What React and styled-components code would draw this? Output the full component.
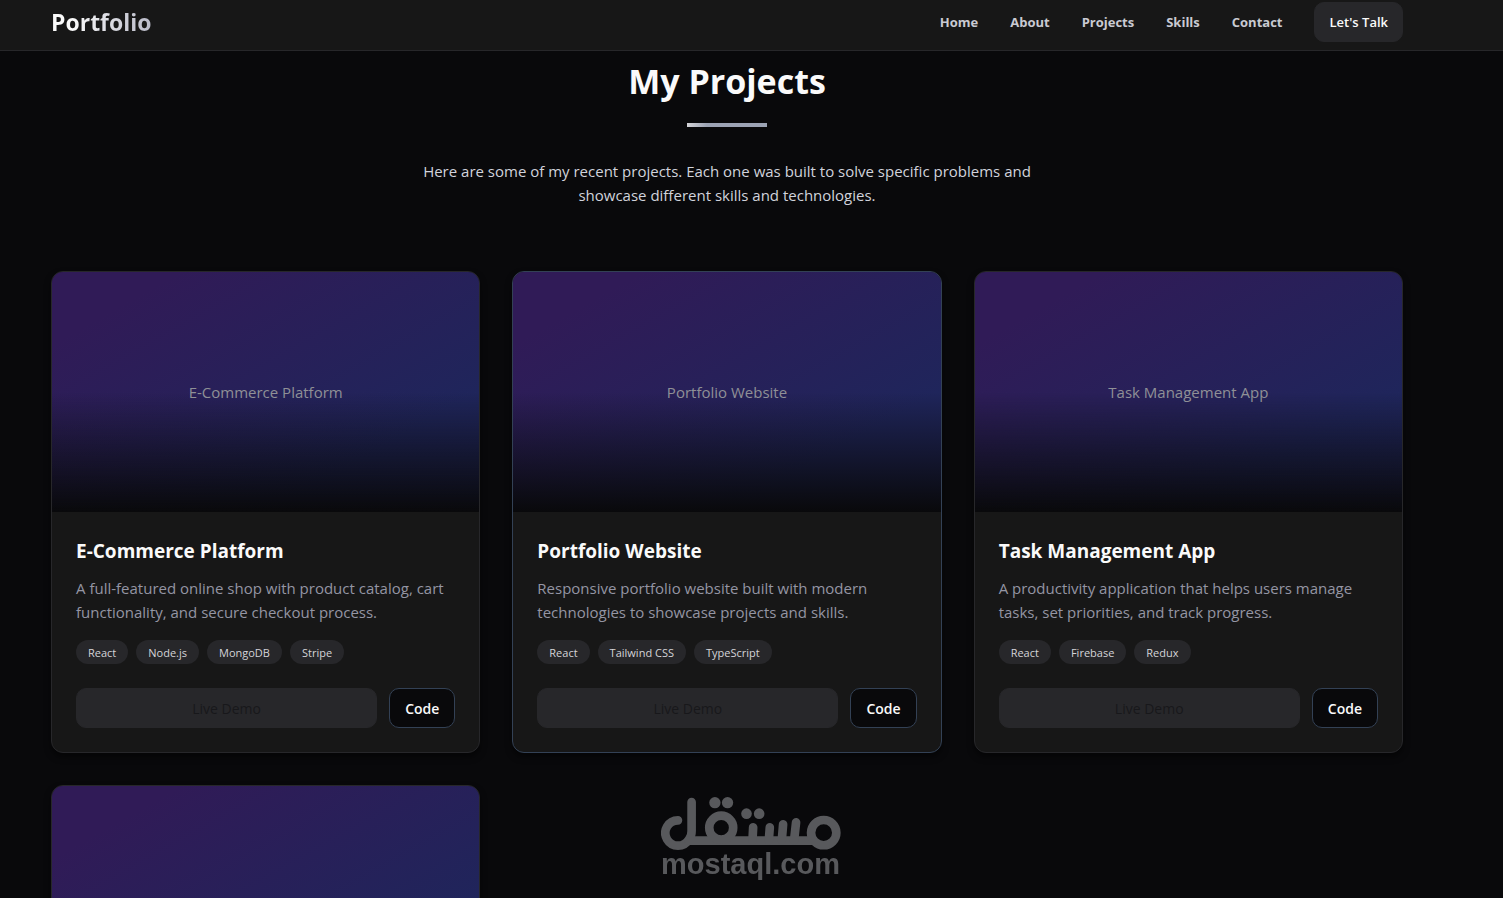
import React from "react";
import styled, { createGlobalStyle } from "styled-components";

const GlobalStyle = createGlobalStyle`
  * {
    box-sizing: border-box;
  }
  body {
    margin: 0;
    background: #09090b;
    color: #fafafa;
    font-family: "Segoe UI", "Open Sans", "Noto Sans", sans-serif;
    font-size: 15px;
    line-height: 24px;
  }
  h1, h2, h3, p, ul {
    margin: 0;
    padding: 0;
  }
`

const Page = styled.div`
  height: 100vh;
  overflow: hidden;
`

const Header = styled.header`
  display: flex;
  align-items: center;
  justify-content: space-between;
  padding: 2px 100px 8px 51px;
  background: #171717;
  border-bottom: 1px solid #27272a;
`

const Logo = styled.a`
  font-size: 23px;
  line-height: 34px;
  font-weight: 700;
  text-decoration: none;
  color: transparent;
  background: linear-gradient(to right, #fafafa 20%, #b9bac8);
  background-clip: text;
`

const Nav = styled.nav`
  display: flex;
  align-items: center;
  gap: 32px;
`

const NavLink = styled.a`
  font-size: 13px;
  line-height: 20px;
  font-weight: 700;
  color: #c9cad2;
  text-decoration: none;
`

const Button = styled.button`
  height: 40px;
  padding: 0 14px;
  border: 1px solid #27272a;
  border-radius: 10px;
  background: #27272a;
  color: #fafafa;
  font-family: inherit;
  font-size: 13px;
  font-weight: 600;
`

const DemoButton = styled(Button)`
  flex: 1;
  color: #18181b;
  font-size: 14px;
  font-weight: 400;
`

const CodeButton = styled(Button)`
  padding: 0 15px;
  border-color: #334155;
  background: #09090b;
  font-size: 14px;
`

const Section = styled.section`
  padding: 10px 100px 32px 51px;
`

const Intro = styled.div`
  display: flex;
  flex-direction: column;
  align-items: center;
  text-align: center;
  margin-bottom: 64px;
`

const Heading = styled.h2`
  font-size: 34px;
  line-height: 40px;
  font-weight: 700;
`

const Divider = styled.div`
  width: 80px;
  height: 4px;
  margin: 22px 0 32px;
  background: linear-gradient(to right, #d4d4d8, #9ca3b4 25%);
`

const Lead = styled.p`
  max-width: 672px;
  color: #d1d3dc;
`

const Grid = styled.div`
  display: grid;
  grid-template-columns: repeat(3, 1fr);
  gap: 32px;
`

const Card = styled.article`
  overflow: hidden;
  border: 1px solid ${props => props.$active ? "#334155" : "#27272a"};
  border-radius: 12px;
  background: #171717;
  box-shadow: 0 4px 6px rgba(0, 0, 0, 0.5);
`

const Preview = styled.div`
  display: flex;
  align-items: center;
  justify-content: center;
  height: 240px;
  color: #8f9096;
  background:
    linear-gradient(to top, #09090b, transparent 50%),
    linear-gradient(to bottom right, #301b57 15%, #1f255b 75%);
`

const CardBody = styled.div`
  padding: 24px;
`

const CardTitle = styled.h3`
  margin-bottom: 10px;
  font-size: 19px;
  line-height: 30px;
  font-weight: 700;
`

const Description = styled.p`
  margin-bottom: 16px;
  color: #9495a3;
`

const Tags = styled.ul`
  display: flex;
  gap: 8px;
  margin-bottom: 24px;
  list-style: none;
`

const Tag = styled.li`
  padding: 5px 12px 3px;
  border-radius: 12px;
  background: #27272a;
  color: #d4d4d8;
  font-size: 11px;
  line-height: 16px;
`

const Actions = styled.div`
  display: flex;
  gap: 12px;
`

const Watermark = styled.div`
  position: fixed;
  bottom: 20px;
  left: 50%;
  display: flex;
  flex-direction: column;
  align-items: center;
  width: 180px;
  margin-left: -91px;
  color: #58595c;
  pointer-events: none;
`

const WatermarkName = styled.span`
  font-family: "Liberation Sans", Arial, sans-serif;
  font-size: 29px;
  line-height: 28px;
  font-weight: 700;
`

const links = ["Home", "About", "Projects", "Skills", "Contact"]

const projects = [
  {
    title: "E-Commerce Platform",
    description: "A full-featured online shop with product catalog, cart functionality, and secure checkout process.",
    tags: ["React", "Node.js", "MongoDB", "Stripe"],
  },
  {
    title: "Portfolio Website",
    description: "Responsive portfolio website built with modern technologies to showcase projects and skills.",
    tags: ["React", "Tailwind CSS", "TypeScript"],
    active: true,
  },
  {
    title: "Task Management App",
    description: "A productivity application that helps users manage tasks, set priorities, and track progress.",
    tags: ["React", "Firebase", "Redux"],
  },
]

function ProjectCard({ project }) {
  return (
    <Card $active={project.active}>
      <Preview>{project.title}</Preview>
      <CardBody>
        <CardTitle>{project.title}</CardTitle>
        <Description>{project.description}</Description>
        <Tags>
          {project.tags.map(tag => <Tag key={tag}>{tag}</Tag>)}
        </Tags>
        <Actions>
          <DemoButton type="button">Live Demo</DemoButton>
          <CodeButton type="button">Code</CodeButton>
        </Actions>
      </CardBody>
    </Card>
  )
}

function MostaqlLogo() {
  return (
    <svg width="180" height="53" viewBox="32 36 541 159" fill="none" stroke="currentColor" strokeWidth="26" strokeLinecap="round" aria-hidden="true">
      <path d="M83 106A38 38 0 1 0 116 163Q124 154 124 138V51" />
      <path d="M116 167H488" />
      <circle cx="213" cy="128" r="36" />
      <circle cx="521" cy="143" r="38" />
      <path d="M309 127L307 166M359 127L356 166M399 118L395 166M438 112L432 166" />
      <g fill="currentColor" stroke="none">
        <circle cx="194" cy="53" r="17" />
        <circle cx="232" cy="53" r="17" />
        <circle cx="289" cy="86" r="16" />
        <circle cx="327" cy="86" r="16" />
      </g>
    </svg>
  )
}

function App() {
  return (
    <Page>
      <GlobalStyle />
      <Header>
        <Logo href="#home">Portfolio</Logo>
        <Nav>
          {links.map(link => (
            <NavLink key={link} href={"#" + link.toLowerCase()}>{link}</NavLink>
          ))}
          <Button type="button">Let's Talk</Button>
        </Nav>
      </Header>

      <Section id="projects">
        <Intro>
          <Heading>My Projects</Heading>
          <Divider />
          <Lead>
            Here are some of my recent projects. Each one was built to solve specific problems and
            showcase different skills and technologies.
          </Lead>
        </Intro>
        <Grid>
          {projects.map(project => <ProjectCard key={project.title} project={project} />)}
          <Card>
            <Preview />
          </Card>
        </Grid>
      </Section>

      <Watermark>
        <MostaqlLogo />
        <WatermarkName>mostaql.com</WatermarkName>
      </Watermark>
    </Page>
  );
}

export default App;
